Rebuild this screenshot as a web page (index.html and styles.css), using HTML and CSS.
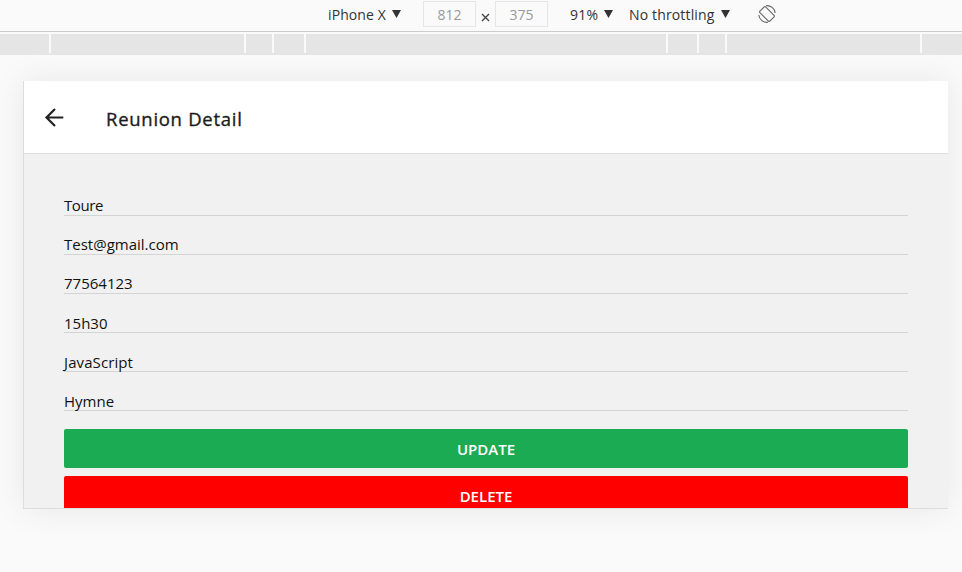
FILE: index.html
```
<!DOCTYPE html>
<html lang="en">
<head>
<meta charset="utf-8">
<title>Reunion Detail</title>
<link rel="stylesheet" href="styles.css">
</head>
<body>
<div class="toolbar">
  <span class="device-name">iPhone X</span><i class="caret"></i>
  <span class="size size-w">812</span>
  <svg class="times" viewBox="0 0 9 9"><path d="M1 1L8 8M8 1L1 8"/></svg>
  <span class="size">375</span>
  <span class="zoom">91%</span><i class="caret"></i>
  <span class="throttle">No throttling</span><i class="caret"></i>
  <svg class="rotate" viewBox="0 0 20 20"><rect x="6" y="3" width="8" height="14" rx="1" transform="rotate(-45 10 10)"/><path d="M9 1.7A8.3 8.3 0 0 1 18.2 9M11 18.3A8.3 8.3 0 0 1 1.8 11"/></svg>
</div>
<div class="ruler">
  <span class="seg s49"></span><span class="seg s193"></span><span class="seg s26"></span><span class="seg s30"></span><span class="seg s360"></span><span class="seg s29"></span><span class="seg s26"></span><span class="seg s193"></span><span class="seg s40"></span>
</div>
<main class="device">
  <header class="header">
    <svg class="back" viewBox="0 0 20 20"><path d="M19.3 10.5H3M11 2L2.5 10.5L11 19"/></svg>
    <h1 class="title">Reunion Detail</h1>
  </header>
  <section class="content">
    <div class="field name">Toure</div>
    <div class="field email">Test@gmail.com</div>
    <div class="field phone">77564123</div>
    <div class="field hour">15h30</div>
    <div class="field topic">JavaScript</div>
    <div class="field song">Hymne</div>
    <div class="button update"><span>UPDATE</span></div>
    <div class="button delete"><span>DELETE</span></div>
  </section>
</main>
</body>
</html>
```
FILE: styles.css
```
* { box-sizing: border-box; }
body {
  margin: 0;
  height: 572px;
  overflow: hidden;
  background: #fafafa;
  font-family: "Open Sans", "Noto Sans", sans-serif;
  font-size: 14px;
  color: #333;
}
.toolbar {
  display: flex;
  align-items: center;
  height: 32px;
  padding: 0 0 3px 328px;
  border-bottom: 1px solid #ccc;
  white-space: nowrap;
  line-height: 20px;
}
.device-name { width: 64px; padding-top: 1px; letter-spacing: .1px; }
.caret {
  width: 9px;
  height: 8px;
  background: #333;
  clip-path: polygon(0 0, 100% 0, 50% 100%);
}
.size {
  width: 53px;
  height: 26px;
  border: 1px solid #e6e6e6;
  text-align: center;
  line-height: 25px;
  color: #999;
}
.size-w { margin-left: 22px; }
.times { width: 9px; height: 9px; margin: 6px 5px 0; fill: none; stroke: #444; stroke-width: 1.4; }
.zoom { width: 34px; margin-left: 22px; padding-top: 1px; letter-spacing: .2px; }
.throttle { width: 92px; margin-left: 16px; padding-top: 1px; letter-spacing: .15px; }
.rotate { width: 20px; height: 20px; margin-left: 27px; fill: none; stroke: #666; stroke-width: 1.1; }
.ruler { display: flex; gap: 2px; height: 21px; margin-top: 2px; border-bottom: 2px solid #e5e5e5; }
.seg { background: #e5e5e5; }
.s49 { width: 49px; }
.s193 { width: 193px; }
.s26 { width: 26px; }
.s30 { width: 30px; }
.s360 { width: 360px; }
.s29 { width: 29px; }
.s40 { width: 40px; }
.device {
  width: 925px;
  height: 428px;
  margin: 26px 0 0 23px;
  border-left: 1px solid #ddd;
  border-bottom: 1px solid #ddd;
  background: #f1f1f1;
  box-shadow: 0 0 32px rgba(0, 0, 0, .08);
  display: flex;
  flex-direction: column;
  overflow: hidden;
}
.header {
  display: flex;
  align-items: center;
  flex: none;
  height: 73px;
  padding-left: 20px;
  background: #fff;
  border-bottom: 1px solid #ddd;
}
.back { width: 20px; height: 20px; fill: none; stroke: #222; stroke-width: 2.2; }
.title {
  margin: 3px 0 0 42px;
  font-size: 18.5px;
  font-weight: 500;
  letter-spacing: .72px;
  -webkit-text-stroke: .35px #1c1c1e;
  color: #1c1c1e;
}
.content { flex: none; padding: 22.4px 40px 0; }
.field {
  height: 39.17px;
  padding-top: 18.4px;
  border-bottom: 1px solid #d4d4d4;
  font-size: 15px;
  line-height: 20px;
  color: #111;
}
.name { letter-spacing: -.4px; }
.topic { letter-spacing: .1px; }
.hour, .topic { padding-top: 19.1px; }
.button {
  display: flex;
  align-items: center;
  justify-content: center;
  height: 39px;
  border-radius: 2px;
  color: #fff;
  font-size: 15px;
  font-weight: 600;
}
.button span { margin-top: 2px; }
.update { margin-top: 17.4px; background: #1bac53; }
.delete { margin-top: 8px; background: #f00; }
```
